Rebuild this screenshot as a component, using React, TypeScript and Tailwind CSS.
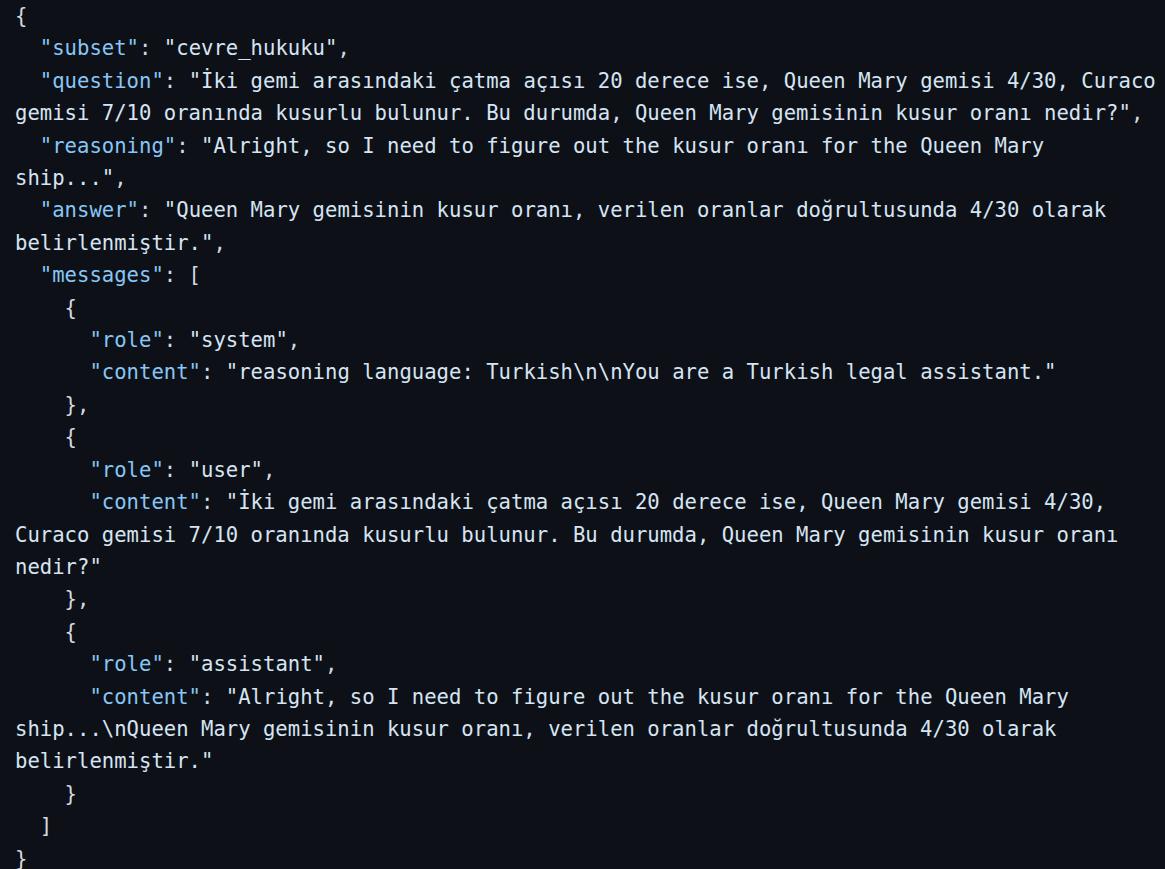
import React from "react";

type Tok = { t: string; c: "k" | "s" | "p" };

const K = (t: string): Tok => ({ t, c: "k" });
const S = (t: string): Tok => ({ t, c: "s" });
const P = (t: string): Tok => ({ t, c: "p" });

const lines: Tok[][] = [
  [P("{")],
  [P("  "), K('"subset"'), P(": "), S('"cevre_hukuku"'), P(",")],
  [
    P("  "),
    K('"question"'),
    P(": "),
    S('"İki gemi arasındaki çatma açısı 20 derece ise, Queen Mary gemisi 4/30, Curaco gemisi 7/10 oranında kusurlu bulunur. Bu durumda, Queen Mary gemisinin kusur oranı nedir?"'),
    P(","),
  ],
  [P("  "), K('"reasoning"'), P(": "), S('"Alright, so I need to figure out the kusur oranı for the Queen Mary ship..."'), P(",")],
  [
    P("  "),
    K('"answer"'),
    P(": "),
    S('"Queen Mary gemisinin kusur oranı, verilen oranlar doğrultusunda 4/30 olarak belirlenmiştir."'),
    P(","),
  ],
  [P("  "), K('"messages"'), P(": [")],
  [P("    {")],
  [P("      "), K('"role"'), P(": "), S('"system"'), P(",")],
  [P("      "), K('"content"'), P(": "), S('"reasoning language: Turkish\\n\\nYou are a Turkish legal assistant."')],
  [P("    },")],
  [P("    {")],
  [P("      "), K('"role"'), P(": "), S('"user"'), P(",")],
  [
    P("      "),
    K('"content"'),
    P(": "),
    S('"İki gemi arasındaki çatma açısı 20 derece ise, Queen Mary gemisi 4/30, Curaco gemisi 7/10 oranında kusurlu bulunur. Bu durumda, Queen Mary gemisinin kusur oranı nedir?"'),
  ],
  [P("    },")],
  [P("    {")],
  [P("      "), K('"role"'), P(": "), S('"assistant"'), P(",")],
  [
    P("      "),
    K('"content"'),
    P(": "),
    S('"Alright, so I need to figure out the kusur oranı for the Queen Mary ship...\\nQueen Mary gemisinin kusur oranı, verilen oranlar doğrultusunda 4/30 olarak belirlenmiştir."'),
  ],
  [P("    }")],
  [P("  ]")],
  [P("}")],
];

const cls = {
  k: "text-[#88c6f5]",
  s: "text-[#d6e4f3]",
  p: "text-[#d4dae0]",
};

export default function App() {
  return (
    <div className="w-[1165px] h-[869px] overflow-hidden bg-[#0d1117] pl-[15px]">
      <pre
        className="m-0 w-[92.5ch] whitespace-pre-wrap text-[20.6px] leading-[32.4px] text-[#d4dae0]"
        style={{ fontFamily: '"DejaVu Sans Mono", "Liberation Mono", monospace' }}
      >
        {lines.map((ln, i) => (
          <div key={i}>
            {ln.map((tk, j) => (
              <span key={j} className={cls[tk.c]}>
                {tk.t}
              </span>
            ))}
          </div>
        ))}
      </pre>
    </div>
  );
}
